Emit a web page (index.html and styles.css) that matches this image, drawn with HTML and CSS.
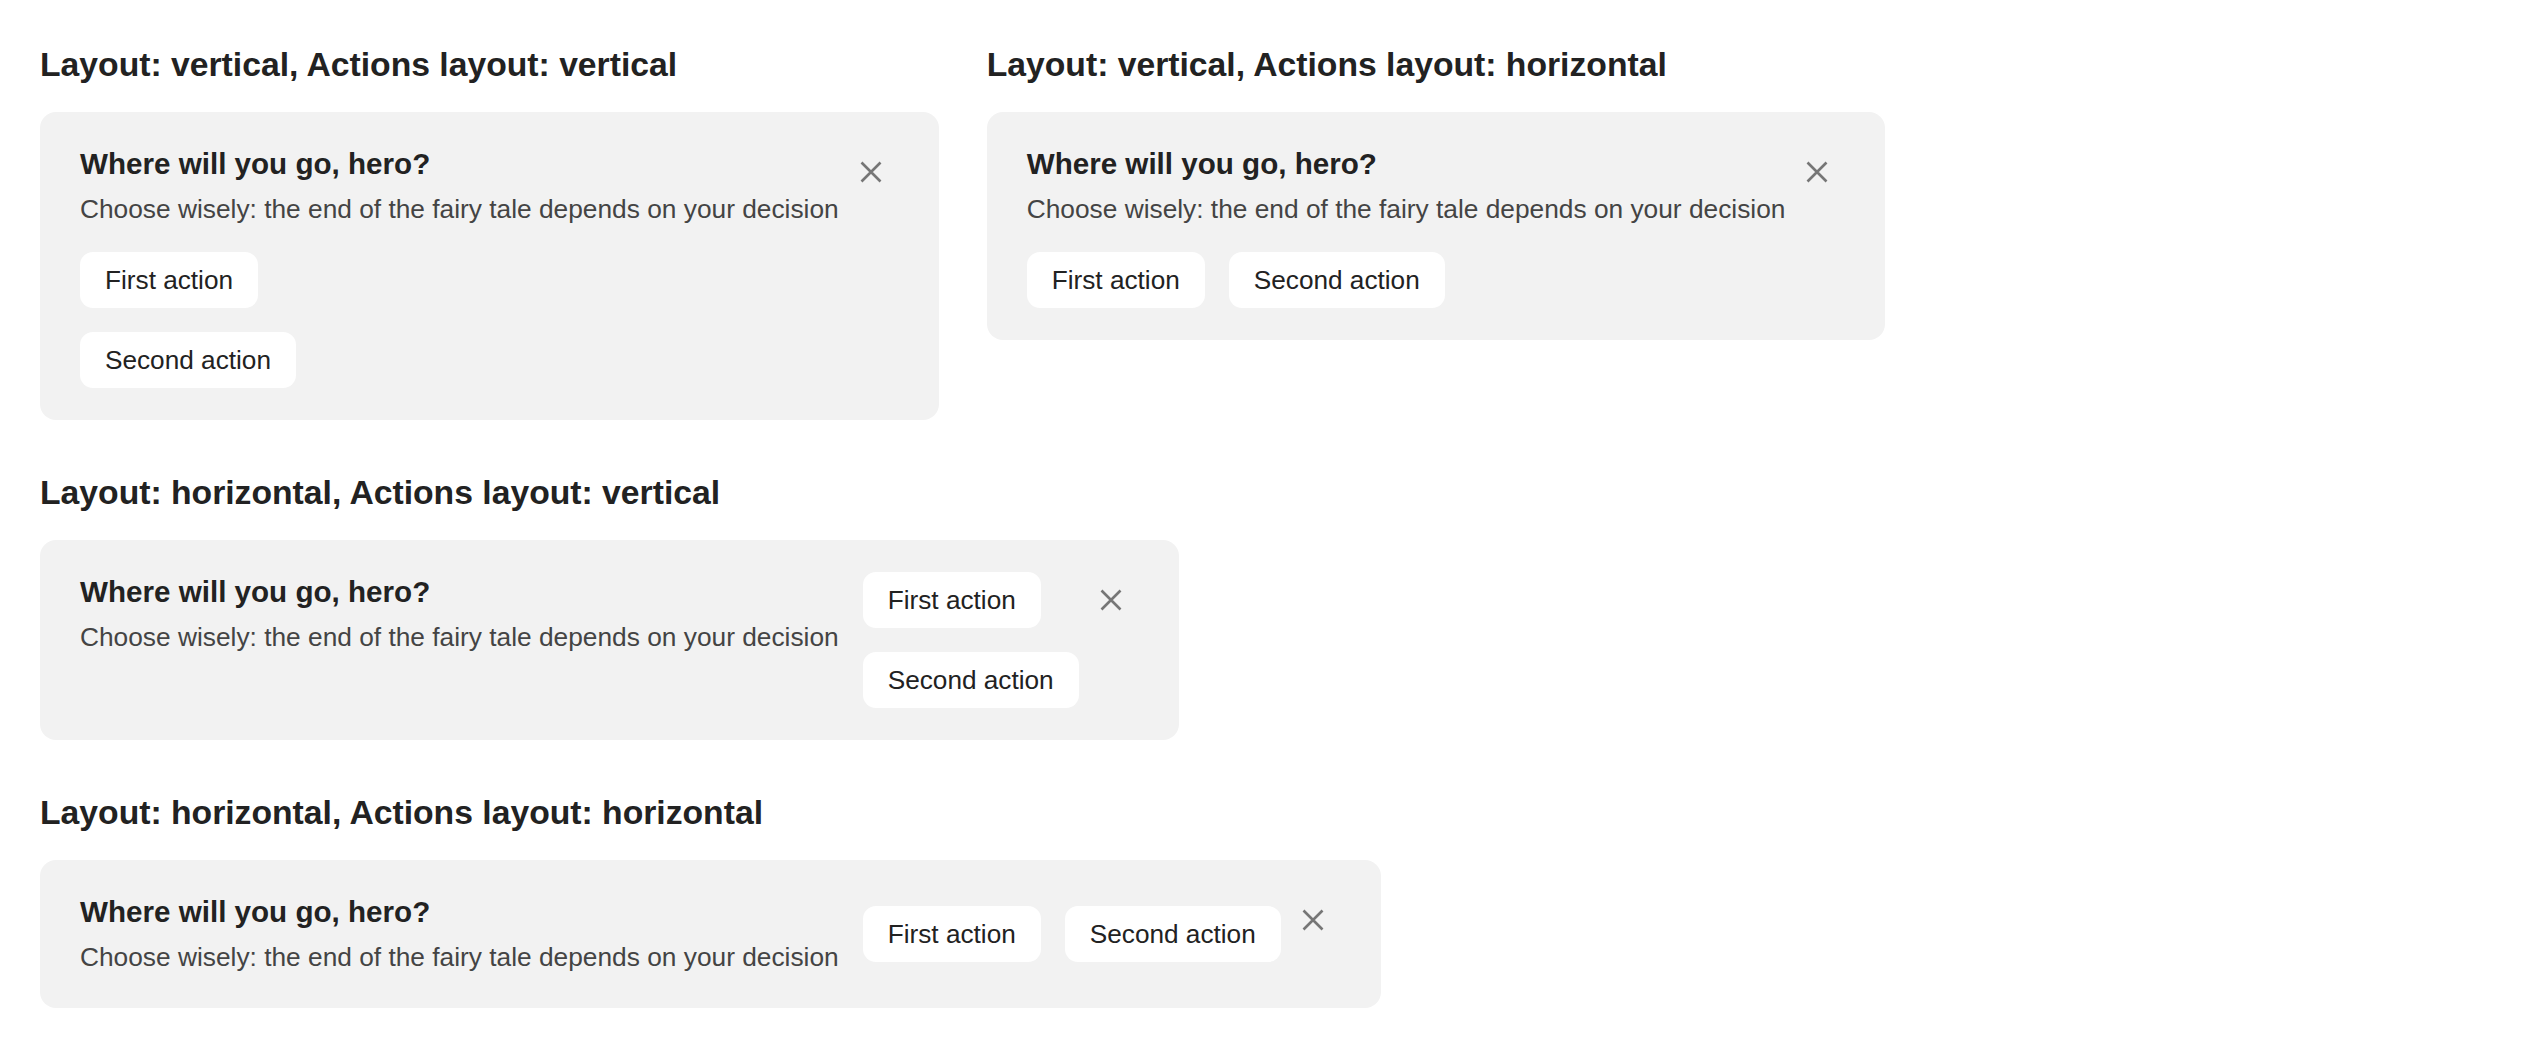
FILE: index.html
```html
<!DOCTYPE html>
<html lang="en">
<head>
<meta charset="utf-8">
<title>Banners</title>
<link rel="stylesheet" href="styles.css">
</head>
<body>
<div class="page">
  <div class="row">
    <section class="section">
      <h2 class="heading">Layout: vertical, Actions layout: vertical</h2>
      <div class="card">
        <div class="body body-vertical">
          <div class="text">
            <div class="title">Where will you go, hero?</div>
            <div class="subtitle">Choose wisely: the end of the fairy tale depends on your decision</div>
          </div>
          <div class="actions actions-vertical">
            <button class="btn">First action</button>
            <button class="btn">Second action</button>
          </div>
        </div>
        <button class="close" aria-label="Close"><svg viewBox="0 0 22 22" width="22" height="22"><path d="M1.5 1.5 L20.5 20.5 M20.5 1.5 L1.5 20.5" stroke="#767676" stroke-width="2.6" fill="none"/></svg></button>
      </div>
    </section>
    <section class="section">
      <h2 class="heading">Layout: vertical, Actions layout: horizontal</h2>
      <div class="card">
        <div class="body body-vertical">
          <div class="text">
            <div class="title">Where will you go, hero?</div>
            <div class="subtitle">Choose wisely: the end of the fairy tale depends on your decision</div>
          </div>
          <div class="actions actions-horizontal">
            <button class="btn">First action</button>
            <button class="btn">Second action</button>
          </div>
        </div>
        <button class="close" aria-label="Close"><svg viewBox="0 0 22 22" width="22" height="22"><path d="M1.5 1.5 L20.5 20.5 M20.5 1.5 L1.5 20.5" stroke="#767676" stroke-width="2.6" fill="none"/></svg></button>
      </div>
    </section>
  </div>
  <section class="section">
    <h2 class="heading">Layout: horizontal, Actions layout: vertical</h2>
    <div class="card">
      <div class="body body-horizontal">
        <div class="text">
          <div class="title">Where will you go, hero?</div>
          <div class="subtitle">Choose wisely: the end of the fairy tale depends on your decision</div>
        </div>
        <div class="actions actions-vertical">
          <button class="btn">First action</button>
          <button class="btn">Second action</button>
        </div>
      </div>
      <button class="close" aria-label="Close"><svg viewBox="0 0 22 22" width="22" height="22"><path d="M1.5 1.5 L20.5 20.5 M20.5 1.5 L1.5 20.5" stroke="#767676" stroke-width="2.6" fill="none"/></svg></button>
    </div>
  </section>
  <section class="section">
    <h2 class="heading">Layout: horizontal, Actions layout: horizontal</h2>
    <div class="card">
      <div class="body body-horizontal">
        <div class="text">
          <div class="title">Where will you go, hero?</div>
          <div class="subtitle">Choose wisely: the end of the fairy tale depends on your decision</div>
        </div>
        <div class="actions actions-horizontal">
          <button class="btn">First action</button>
          <button class="btn">Second action</button>
        </div>
      </div>
      <button class="close" aria-label="Close"><svg viewBox="0 0 22 22" width="22" height="22"><path d="M1.5 1.5 L20.5 20.5 M20.5 1.5 L1.5 20.5" stroke="#767676" stroke-width="2.6" fill="none"/></svg></button>
    </div>
  </section>
</div>
</body>
</html>
```
FILE: styles.css
```css
* { box-sizing: border-box; }
html, body { margin: 0; padding: 0; background: #ffffff; }
body {
  font-family: "Liberation Sans", Arial, Helvetica, sans-serif;
  color: #222222;
}
.page {
  padding: 44px 40px 40px 40px;
  display: flex;
  flex-direction: column;
  gap: 52px;
  align-items: flex-start;
}
.row {
  display: flex;
  gap: 48px;
  align-items: flex-start;
}
.section {
  display: flex;
  flex-direction: column;
  align-items: flex-start;
}
.heading {
  margin: 0 0 27px 0;
  font-size: 33.7px;
  line-height: 41px;
  font-weight: 700;
  color: #222222;
}
.card {
  display: flex;
  align-items: flex-start;
  gap: 4px;
  background: #f2f2f2;
  border-radius: 16px;
  padding: 32px 40px;
}
.body {
  display: flex;
}
.body-vertical {
  flex-direction: column;
  gap: 24px;
}
.body-horizontal {
  flex-direction: row;
  align-items: center;
  gap: 24px;
}
.text {
  display: flex;
  flex-direction: column;
  align-self: flex-start;
}
.title {
  font-size: 29.6px;
  line-height: 40px;
  font-weight: 700;
  color: #222222;
}
.subtitle {
  margin-top: 6px;
  font-size: 26.3px;
  line-height: 38px;
  color: #444444;
  white-space: nowrap;
}
.actions {
  display: flex;
  align-items: flex-start;
  gap: 24px;
}
.actions-vertical { flex-direction: column; }
.actions-horizontal { flex-direction: row; }
.btn {
  font-family: "Liberation Sans", Arial, Helvetica, sans-serif;
  font-size: 26.2px;
  line-height: 36px;
  color: #222222;
  background: #ffffff;
  border: none;
  border-radius: 13px;
  padding: 10px 25px;
  height: 56px;
  white-space: nowrap;
  cursor: pointer;
}
.close {
  width: 56px;
  height: 56px;
  flex: none;
  border: none;
  background: transparent;
  padding: 0;
  display: flex;
  align-items: center;
  justify-content: center;
  cursor: pointer;
}
.close svg { display: block; }
```
